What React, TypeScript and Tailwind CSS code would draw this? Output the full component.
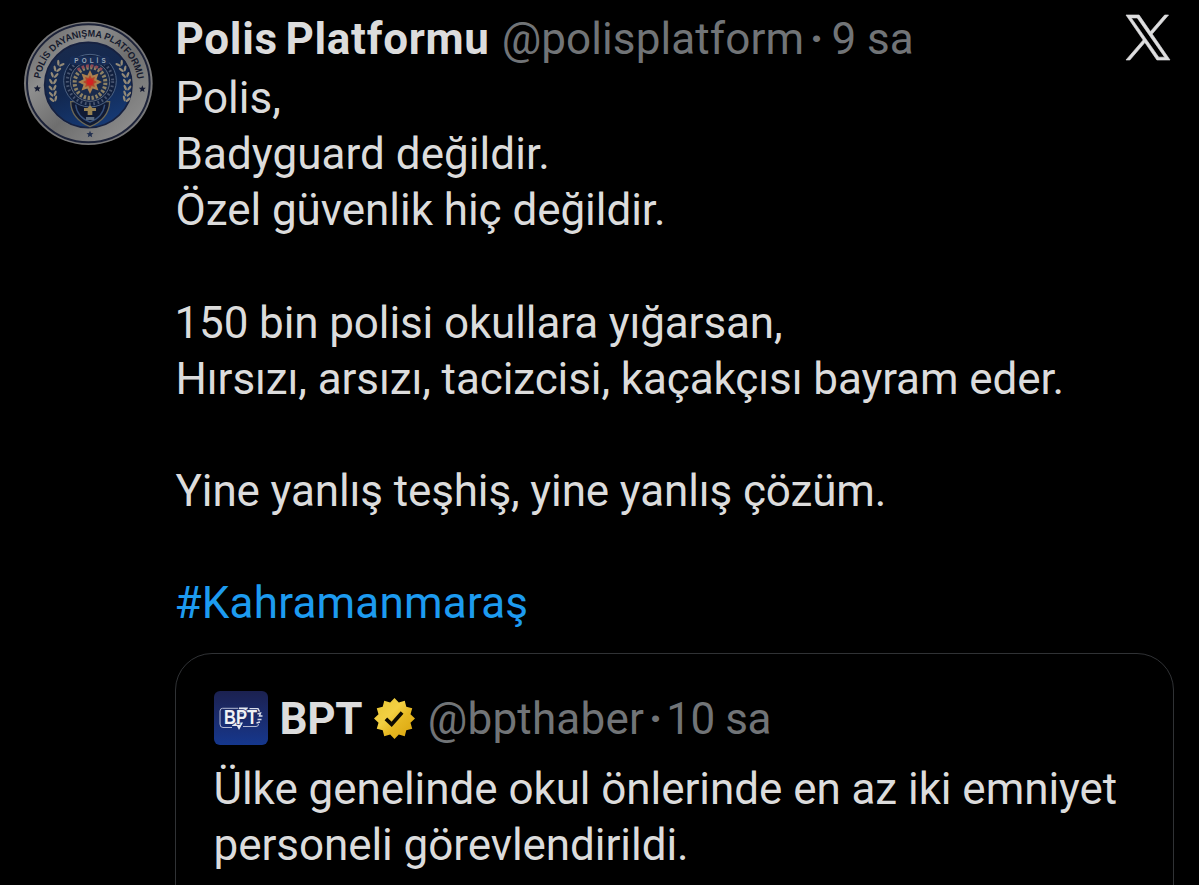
import type { ReactNode } from 'react';

interface LineProps {
  text: string;
  className?: string;
}

const postLines: LineProps[] = [
  { text: 'Polis,' },
  { text: 'Badyguard değildir.', className: 'tracking-[0.05px]' },
  { text: 'Özel güvenlik hiç değildir.', className: 'tracking-[-0.05px]' },
  { text: '' },
  { text: '150 bin polisi okullara yığarsan,', className: '-ml-px tracking-[-0.12px]' },
  { text: 'Hırsızı, arsızı, tacizcisi, kaçakçısı bayram eder.', className: 'tracking-[-0.1px]' },
  { text: '' },
  { text: 'Yine yanlış teşhiş, yine yanlış çözüm.', className: 'tracking-[-0.12px]' },
  { text: '' },
  { text: '#Kahramanmaraş', className: '-ml-px text-[#1d9bf0] tracking-[0.2px]' },
];

const quoteLines: LineProps[] = [
  { text: 'Ülke genelinde okul önlerinde en az iki emniyet', className: 'tracking-[-0.06px]' },
  { text: 'personeli görevlendirildi.', className: 'tracking-[-0.06px]' },
];

const starPoints = (cx: number, cy: number, outer: number, inner: number, n: number) =>
  Array.from({ length: n * 2 }, (_, i) => {
    const r = i % 2 === 0 ? outer : inner;
    const a = (i * Math.PI) / n - Math.PI / 2;
    return `${(cx + r * Math.cos(a)).toFixed(1)},${(cy + r * Math.sin(a)).toFixed(1)}`;
  }).join(' ');

const Lines = ({ lines }: { lines: LineProps[] }) => (
  <div className="text-[44px] leading-[56.1px] whitespace-pre text-[#dcdcdc]">
    {lines.map((line, i) => (
      <p key={i} className={`h-[56.1px] ${line.className ?? ''}`}>
        {line.text}
      </p>
    ))}
  </div>
);

const Muted = ({ children, className }: { children: ReactNode; className: string }) => (
  <span className={`text-[#717477] ${className}`}>{children}</span>
);

const XLogo = () => (
  <svg
    viewBox="0 0 1200 1227"
    className="h-[45px] w-[44px] overflow-visible"
    fill="#dededf"
    stroke="#dededf"
    strokeWidth="18"
  >
    <path d="M714.163 519.284L1160.89 0H1055.03L667.137 450.887L357.328 0H0L468.492 681.821L0 1226.37H105.866L515.491 750.218L842.672 1226.37H1200L714.137 519.284H714.163ZM569.165 687.828L521.697 619.934L144.011 79.6944H306.615L611.412 515.685L658.88 583.579L1055.08 1150.3H892.476L569.165 687.854V687.828Z" />
  </svg>
);

// one leaf pair per entry, left branch; the right branch is mirrored
const leaves = [
  [136, 160, 30],
  [126, 176, 20],
  [118, 194, 10],
  [114, 213, 0],
  [113, 232, -6],
  [114, 250, -12],
  [116, 266, -18],
];

const Branch = () => (
  <g fill="#938a78">
    {leaves.map(([x, y, a]) => (
      <g key={y} transform={`translate(${x} ${y}) rotate(${a})`}>
        <ellipse cx="-6" cy="-2" rx="3.6" ry="9" transform="rotate(-32)" />
        <ellipse cx="6" cy="-2" rx="3.6" ry="9" transform="rotate(32)" />
      </g>
    ))}
  </g>
);

const PoliceSeal = () => (
  <svg viewBox="0 0 450 435" className="h-[145px] w-[150px] font-['Liberation_Sans',sans-serif]">
    <defs>
      <linearGradient id="rim" x1="0" y1="0" x2="1" y2="1">
        <stop offset="0" stopColor="#5f5f60" />
        <stop offset="0.3" stopColor="#8e8e8e" />
        <stop offset="0.55" stopColor="#6e6e6e" />
        <stop offset="0.8" stopColor="#858585" />
        <stop offset="1" stopColor="#999999" />
      </linearGradient>
      <linearGradient id="field" x1="0.3" y1="0" x2="0.7" y2="1">
        <stop offset="0" stopColor="#192a4c" />
        <stop offset="0.5" stopColor="#122850" />
        <stop offset="1" stopColor="#163b78" />
      </linearGradient>
      <path id="arc" d="M76 206 A147 147 0 0 1 367 206" />
    </defs>
    <ellipse cx="220" cy="220" rx="193" ry="185" fill="#777778" />
    <ellipse cx="220" cy="220" rx="184" ry="177" fill="url(#rim)" stroke="#1c2238" strokeWidth="6" />
    <ellipse cx="220" cy="225" rx="134" ry="131" fill="#7d828c" />
    <ellipse cx="220" cy="225" rx="131" ry="128" fill="url(#field)" stroke="#17213f" strokeWidth="5" />
    <text fontSize="29" fontWeight="700" fill="#151a2d">
      <textPath href="#arc" textLength="422" lengthAdjust="spacingAndGlyphs">
        POLİS DAYANIŞMA PLATFORMU
      </textPath>
    </text>
    <polygon points={starPoints(67, 236, 11, 5, 5)} fill="#151b33" />
    <polygon points={starPoints(382, 237, 11, 5, 5)} fill="#151b33" />
    <polygon points={starPoints(225, 373, 11, 5, 5)} fill="#22304f" />
    <Branch />
    <g transform="translate(450 0) scale(-1 1)">
      <Branch />
    </g>
    <path d="M167 275 Q168 326 225 350 Q282 326 284 275Z" fill="#101a34" stroke="#6b6756" strokeWidth="4" />
    <path d="M182 284 Q186 322 225 336 Q264 322 269 284" fill="none" stroke="#36517d" strokeWidth="4" />
    <circle cx="225" cy="212" r="79" fill="#11203f" stroke="#4d6384" strokeWidth="3" />
    <circle cx="225" cy="214" r="68" fill="none" stroke="#707c92" strokeWidth="9" strokeDasharray="5 8" opacity="0.6" />
    <circle cx="225" cy="215" r="59" fill="#1a2b4c" stroke="#5f6a7c" strokeWidth="3" />
    <rect x="164" y="139" width="120" height="25" rx="9" fill="#172c55" />
    <text x="178" y="160" fontSize="19" fontWeight="700" fill="#98a6b6" textLength="94">
      POLİS
    </text>
    <circle cx="225" cy="218" r="46" fill="none" stroke="#8d8164" strokeWidth="12" strokeDasharray="7 5" />
    <path d="M188 180 Q225 155 262 180" fill="none" stroke="#8f4854" strokeWidth="9" strokeDasharray="8 6" />
    <polygon points={starPoints(225, 216, 36, 21, 8)} fill="#a9804f" />
    <polygon points={starPoints(225, 216, 21, 13, 8)} fill="#b5452a" />
    <circle cx="225" cy="216" r="10" fill="#d22323" />
    <path d="M225 285 l7 9 h11 v9 h-11 v12 h-14 v-12 h-11 v-9 h11z" fill="#978152" />
    <rect x="213" y="321" width="25" height="9" fill="#5a697d" />
  </svg>
);

const BptLogo = () => (
  <div className="h-[54px] w-[54px] overflow-hidden rounded-[6px] bg-linear-to-b from-[#1b2150] to-[#15378d]">
    <svg viewBox="0 0 54 54" className="h-full w-full font-['Liberation_Sans',sans-serif]">
      <path
        d="M24 17.3 H8.5 Q6 17.3 6 20 V33 Q6 36.5 9 36.5 H18 M29 35.5 H42 Q44.5 35.5 44.5 33"
        fill="none"
        stroke="#b3bad2"
        strokeWidth="1"
      />
      <path d="M25 16.5 h9 l-2 6 h-8z M19 31.5 h10 l-4 7.5 l-2 -4 h-5z" fill="#e6e9f1" />
      <text
        x="10"
        y="33.4"
        fontSize="19.5"
        fontWeight="700"
        fill="#f0f1f5"
        stroke="#1a2a66"
        strokeWidth="1.6"
        paintOrder="stroke"
        textLength="33"
        lengthAdjust="spacingAndGlyphs"
      >
        BPT
      </text>
      <path
        d="M35.5 17.6 h8.5 l1.5 3 M43.5 23 l3 -1 l-1 3 h3 M43.5 28.5 h4 M42.5 32 l3.5 -1"
        fill="none"
        stroke="#d9dde9"
        strokeWidth="1.4"
      />
    </svg>
  </div>
);

const GoldBadge = () => (
  <svg viewBox="0 0 40 40" className="h-[41px] w-[41px]">
    <defs>
      <linearGradient id="gold" x1="0" y1="0" x2="1" y2="1">
        <stop offset="0" stopColor="#e6c433" />
        <stop offset="0.4" stopColor="#f3d043" />
        <stop offset="0.6" stopColor="#e6b822" />
        <stop offset="1" stopColor="#d9a30c" />
      </linearGradient>
    </defs>
    <polygon points={starPoints(20, 20, 20, 16.2, 12)} fill="url(#gold)" />
    <path d="M11.6 20.4 L17.2 25.8 L27.4 14.2" fill="none" stroke="#0c0901" strokeWidth="3.6" />
  </svg>
);

const QuoteCard = () => (
  <article className="mt-[21.5px] -ml-[0.5px] h-[300px] w-[999px] rounded-[37px] border border-[#303235] pt-[37px] pl-[37.5px]">
    <header className="flex h-[70.5px] text-[44px] leading-[56.1px] whitespace-nowrap">
      <BptLogo />
      <span className="ml-[12px] font-bold tracking-[-0.3px] text-[#dcdcdc]">BPT</span>
      <div className="ml-[11.5px] pt-[7px]">
        <GoldBadge />
      </div>
      <Muted className="ml-[13px] tracking-[0.2px]">@bpthaber</Muted>
      <Muted className="ml-[5px] font-bold">·</Muted>
      <Muted className="ml-[4px] tracking-[-0.5px]">10 sa</Muted>
    </header>
    <Lines lines={quoteLines} />
  </article>
);

const App = () => (
  <main className="flex h-[885px] w-[1199px] overflow-hidden bg-black font-['Roboto',sans-serif]">
    <div className="w-[175.5px] shrink-0 pt-[10px] pl-[15px]">
      <PoliceSeal />
    </div>
    <div className="grow">
      <header className="flex h-[70.2px] pt-[10.6px] text-[44px] leading-[56.1px] whitespace-nowrap">
        <span className="font-bold tracking-[0.7px] text-[#dcdcdc] [word-spacing:-4px]">Polis Platformu</span>
        <Muted className="ml-[12px] tracking-[0.1px]">@polisplatform</Muted>
        <Muted className="ml-[6px] font-bold">·</Muted>
        <Muted className="ml-[8px]">9 sa</Muted>
        <div className="mr-[29.5px] ml-auto pt-[4.4px]">
          <XLogo />
        </div>
      </header>
      <Lines lines={postLines} />
      <QuoteCard />
    </div>
  </main>
);

export default App;
